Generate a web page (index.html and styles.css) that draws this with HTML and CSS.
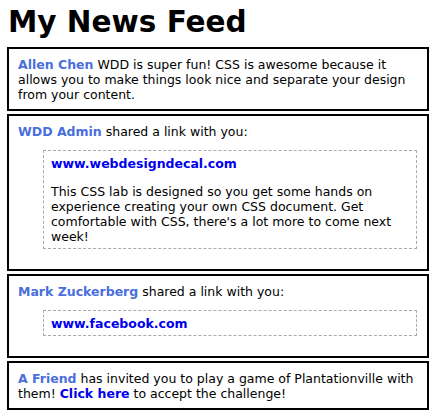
FILE: index.html
```html
<!DOCTYPE html>
<html>
<head>
<meta charset="utf-8">
<link rel="stylesheet" href="styles.css">
</head>
<body>
<h1 class="title">My News Feed</h1>
<div class="feed">
  <div class="post">
    <span class="name">Allen Chen</span> WDD is super fun! CSS is awesome because it allows you to make things look nice and separate your design from your content.
  </div>
  <div class="post">
    <span class="name">WDD Admin</span> shared a link with you:
    <div class="share">
      <a class="link" href="#">www.webdesigndecal.com</a>
      <p class="desc">This CSS lab is designed so you get some hands on experience creating your own CSS document. Get comfortable with CSS, there's a lot more to come next week!</p>
    </div>
  </div>
  <div class="post">
    <span class="name">Mark Zuckerberg</span> shared a link with you:
    <div class="share">
      <a class="link" href="#">www.facebook.com</a>
    </div>
  </div>
  <div class="post">
    <span class="name">A Friend</span> has invited you to play a game of Plantationville with them! <a class="link" href="#">Click here</a> to accept the challenge!
  </div>
</div>
</body>
</html>
```
FILE: styles.css
```css
body {
  margin: 0;
  padding: 3px 0 0 7px;
  font-family: "DejaVu Sans", Verdana, sans-serif;
  font-size: 12.5px;
  color: #000;
  background: #fff;
}
.title {
  margin: 0 0 6px 1px;
  font-size: 29.5px;
  font-weight: bold;
  line-height: 38px;
}
.feed {
  display: flex;
  flex-direction: column;
  gap: 3px;
  width: 422px;
}
.post {
  border: 2px solid #000;
  padding: 8px 10px 7px 9px;
  line-height: 15px;
}
.name {
  color: #4a6fdc;
  font-weight: bold;
}
.link {
  color: #0000ee;
  font-weight: bold;
  text-decoration: none;
}
.share {
  margin: 11px 0 13px 25px;
  border: 1px dashed #aaa;
  padding: 5px 7px 4px;
}
.desc {
  margin: 13px 0 0;
}
```
